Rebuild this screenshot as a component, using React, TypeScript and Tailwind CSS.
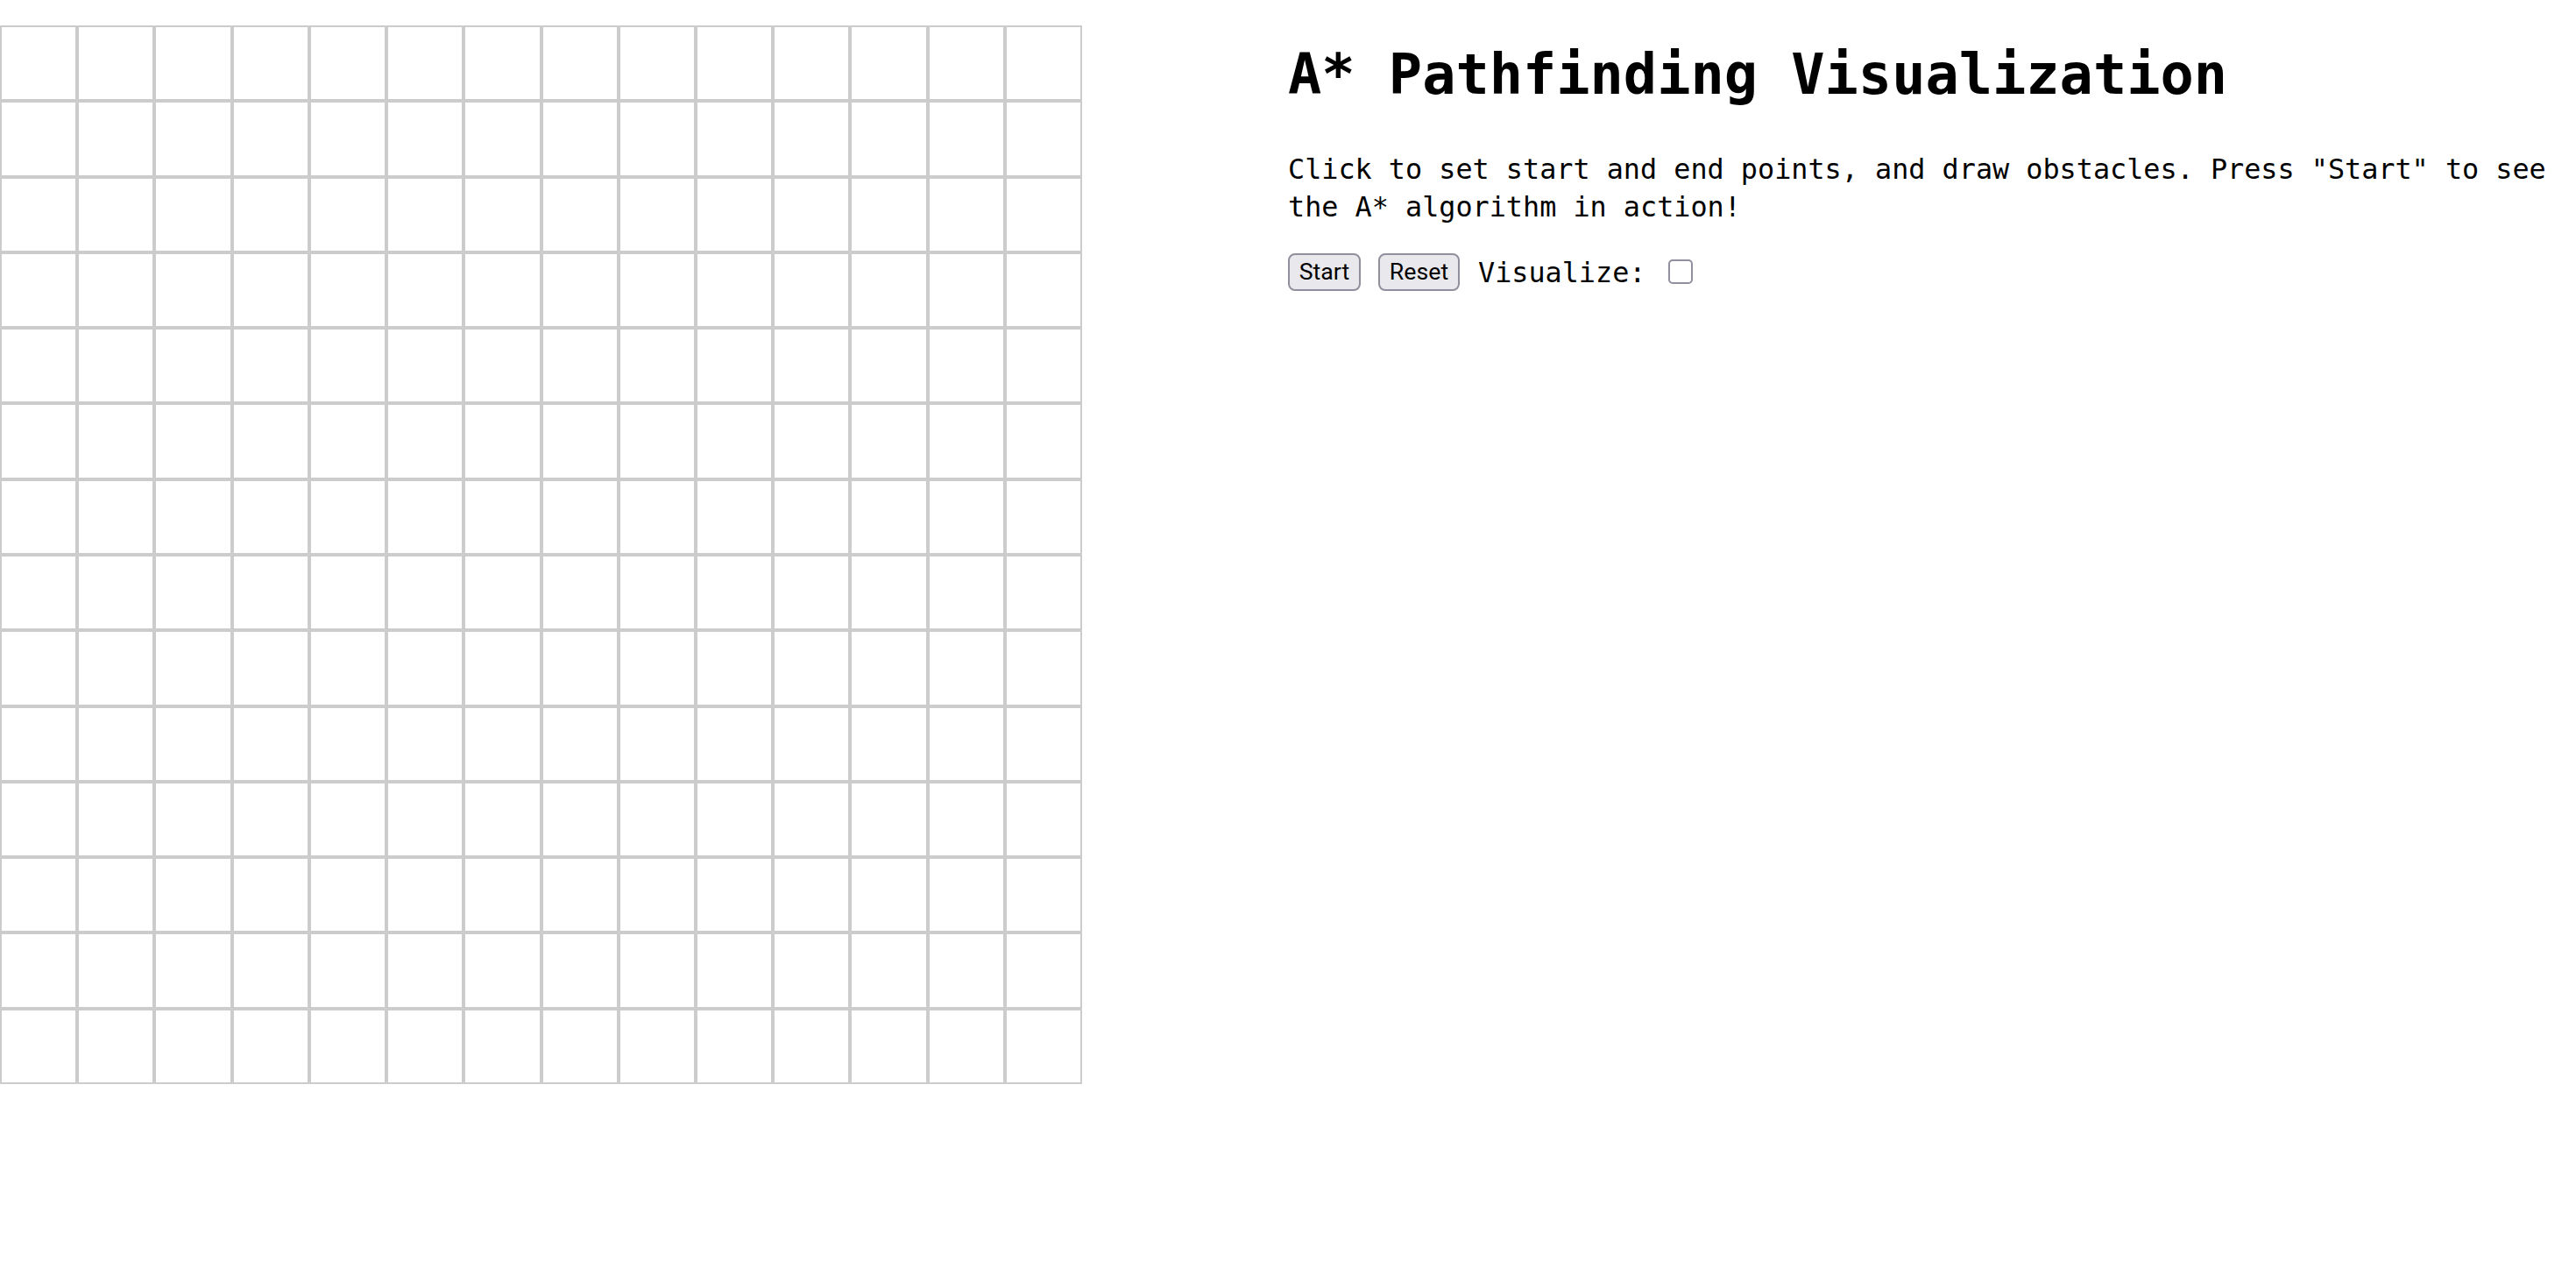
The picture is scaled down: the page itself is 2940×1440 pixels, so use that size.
import React from "react"

const SIZE = 14

export default function App() {
  const cells = Array.from({ length: SIZE * SIZE }, (_, i) => i)

  return (
    <main className="flex items-start gap-[235px] bg-white text-black font-['DejaVu_Sans_Mono',monospace]">
      <div className="mt-[29px] grid h-[1208px] w-[1235px] shrink-0 grid-cols-14 grid-rows-14">
        {cells.map((i) => (
          <div key={i} className="border-2 border-[#cccccc] bg-white" />
        ))}
      </div>

      <section className="flex w-[1455px] flex-col items-start">
        <h1 className="mt-[47px] text-[63.6px] font-bold leading-[76.8px]">
          A* Pathfinding Visualization
        </h1>
        <p className="mt-[47px] text-[31.8px] leading-[43px]">
          Click to set start and end points, and draw obstacles. Press "Start" to see the A* algorithm in action!
        </p>
        <div className="mt-[32px] flex h-[43px] items-center">
          <button className="h-[43px] w-[83px] rounded-[8px] border-2 border-[#8f8f9d] bg-[#e9e9ed] font-['Roboto',sans-serif] text-[26.7px] leading-none">
            Start
          </button>
          <button className="ml-[20px] h-[43px] w-[93px] rounded-[8px] border-2 border-[#8f8f9d] bg-[#e9e9ed] font-['Roboto',sans-serif] text-[26.7px] leading-none">
            Reset
          </button>
          <label className="ml-[21px] flex items-center text-[31.8px] leading-[43px]">
            Visualize:
            <input
              type="checkbox"
              className="ml-[26px] h-[28px] w-[28px] appearance-none rounded-[5px] border-2 border-[#8f8f9d] bg-white"
            />
          </label>
        </div>
      </section>
    </main>
  )
}
